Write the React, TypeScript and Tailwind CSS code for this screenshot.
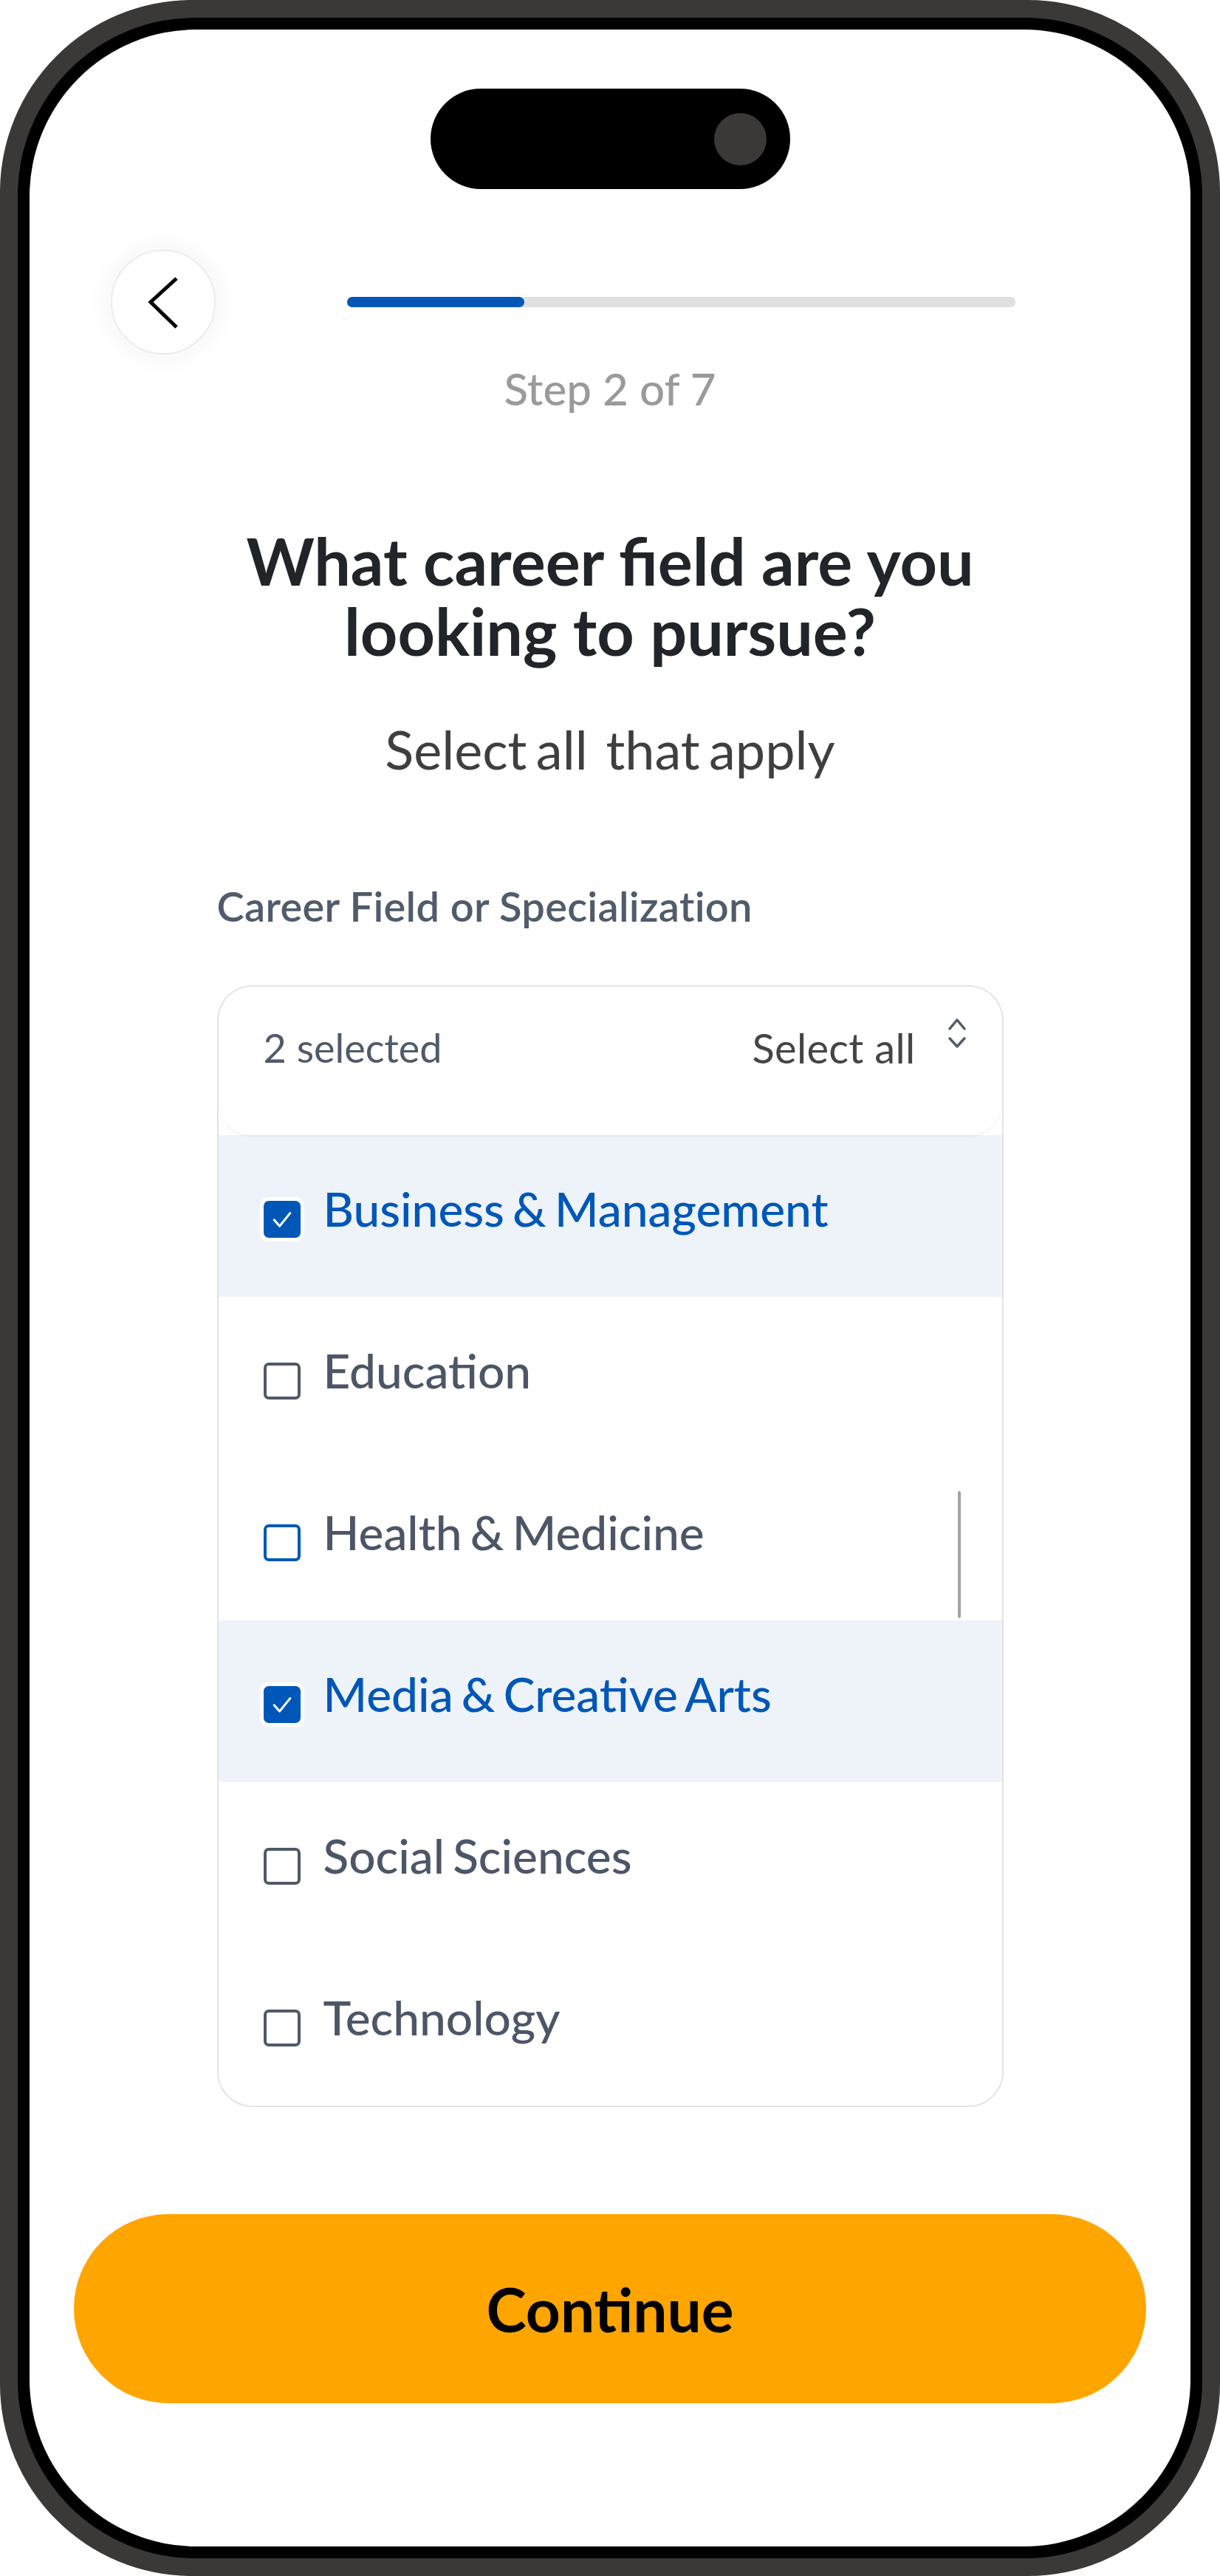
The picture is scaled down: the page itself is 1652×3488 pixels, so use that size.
import { useState } from "react";

type Field = { label: string; checked: boolean; focused?: boolean };

const FIELDS: Field[] = [
  { label: "Business & Management", checked: true },
  { label: "Education", checked: false },
  { label: "Health & Medicine", checked: false, focused: true },
  { label: "Media & Creative Arts", checked: true },
  { label: "Social Sciences", checked: false },
  { label: "Technology", checked: false },
];

function BackIcon() {
  return (
    <svg width="46" height="78" viewBox="0 0 46 78" fill="none" stroke="#000" strokeWidth="5" aria-hidden="true">
      <path d="M41 7 L6 39 L41 73" />
    </svg>
  );
}

function SortIcon() {
  return (
    <svg width="26" height="42" viewBox="0 0 26 42" fill="none" stroke="#535d6b" strokeWidth="3.5" strokeLinecap="round" strokeLinejoin="round" aria-hidden="true">
      <path d="M3 15 L13 3 L23 15" />
      <path d="M3 28 L13 39 L23 28" />
    </svg>
  );
}

function CheckIcon() {
  return (
    <svg width="40" height="40" viewBox="0 0 24 24" fill="none" stroke="#fff" strokeWidth="1.8" strokeLinecap="round" strokeLinejoin="round" aria-hidden="true">
      <path d="M5.5 12.5 L10 17.5 L18.5 7" />
    </svg>
  );
}

function Checkbox({ checked, focused }: { checked: boolean; focused?: boolean }) {
  if (checked) {
    return (
      <span className="mt-[8px] flex h-[50px] w-[50px] shrink-0 items-center justify-center rounded-[7px] bg-[#0057b8] ring-[5px] ring-white">
        <CheckIcon />
      </span>
    );
  }
  return (
    <span
      className={
        focused
          ? "mt-[8px] h-[50px] w-[50px] shrink-0 rounded-[7px] border-[4px] border-[#0057b8] bg-white"
          : "mt-[8px] h-[50px] w-[50px] shrink-0 rounded-[7px] border-[4px] border-[#4f5968] bg-white"
      }
    />
  );
}

export default function App() {
  const [fields, setFields] = useState(FIELDS);
  const selected = fields.filter((f) => f.checked).length;

  const toggle = (i: number) =>
    setFields((prev) => prev.map((f, j) => (j === i ? { ...f, checked: !f.checked } : f)));

  return (
    <div className="h-[3488px] w-[1652px] bg-white font-['Lato',sans-serif]">
      <div className="h-full w-full rounded-[260px] bg-[#3a3937] p-[24px]">
        <div className="h-full w-full rounded-[240px] bg-black p-[16px]">
          <div className="flex h-full w-full flex-col overflow-hidden rounded-[226px] bg-white">
            {/* dynamic island */}
            <div className="mx-auto mt-[80px] flex h-[136px] w-[487px] items-center justify-end rounded-full bg-black pr-[32px]">
              <span className="h-[71px] w-[71px] rounded-full bg-[#3a3937]" />
            </div>

            {/* top bar */}
            <div className="mt-[82px] flex h-[142px] items-center pl-[110px]">
              <button className="flex h-[142px] w-[142px] items-center justify-center rounded-full border-2 border-[#ececec] bg-white shadow-[0_0_40px_rgba(0,0,0,0.06)]">
                <BackIcon />
              </button>
              <div className="ml-[178px] h-[14px] w-[905px] rounded-full bg-[#e0e0e0]">
                <div className="h-full w-[240px] rounded-full bg-[#0057b8]" />
              </div>
            </div>

            <p className="mt-[10px] text-center text-[60px] leading-[72px] font-medium text-[#9a9a9a]">Step 2 of 7</p>

            <h1 className="mt-[150px] text-center text-[88px] leading-[95px] font-bold text-[#212529]">
              What career field are you
              <br />
              looking to pursue?
            </h1>

            <p className="mt-[69px] text-center text-[72px] leading-[86px] text-[#3f3f3f] whitespace-pre [word-spacing:-6px]">Select all  that apply</p>

            <div className="mx-auto mt-[136px] w-[1065px]">
              <p className="text-[56px] leading-[68px] font-semibold tracking-[0.3px] text-[#505b6b]">Career Field or Specialization</p>

              <div className="relative mt-[73px] overflow-hidden rounded-[48px] border-2 border-[#e3e3e3] bg-white">
                <div className="relative z-10 flex h-[201px] items-start justify-between rounded-b-[44px] bg-white pl-[61px] pr-[48px] pt-[49px] shadow-[0_2px_3px_rgba(0,0,0,0.05)]">
                  <span className="text-[54px] leading-[68px] text-[#4f5a6a]">{selected} selected</span>
                  <div className="flex items-start gap-[43px]">
                    <span className="text-[56px] leading-[68px] tracking-[0.3px] text-[#454545]">Select all</span>
                    <span className="-mt-[7px]">
                      <SortIcon />
                    </span>
                  </div>
                </div>

                {fields.map((f, i) => (
                  <div
                    key={f.label}
                    onClick={() => toggle(i)}
                    className={
                      f.checked
                        ? "flex h-[219px] cursor-pointer items-center gap-[31px] bg-[#eef3fa] pl-[61px]"
                        : "flex h-[219px] cursor-pointer items-center gap-[31px] bg-white pl-[61px]"
                    }
                  >
                    <Checkbox checked={f.checked} focused={f.focused} />
                    <span
                      className={
                        f.checked
                          ? "mb-[20px] text-[64px] leading-[76px] font-medium [word-spacing:-5px] text-[#0057b8]"
                          : "mb-[20px] text-[64px] leading-[76px] font-medium [word-spacing:-5px] text-[#4c5667]"
                      }
                    >
                      {f.label}
                    </span>
                  </div>
                ))}

                {/* scrollbar */}
                <span className="absolute right-[56px] top-[683px] h-[172px] w-[4px] rounded-full bg-[#a3a3a3]" />
              </div>
            </div>

            <button className="mx-auto mt-[145px] flex h-[256px] w-[1452px] shrink-0 items-center justify-center rounded-full bg-[#ffa500] text-[82px] font-bold text-black">
              Continue
            </button>
          </div>
        </div>
      </div>
    </div>
  );
}
